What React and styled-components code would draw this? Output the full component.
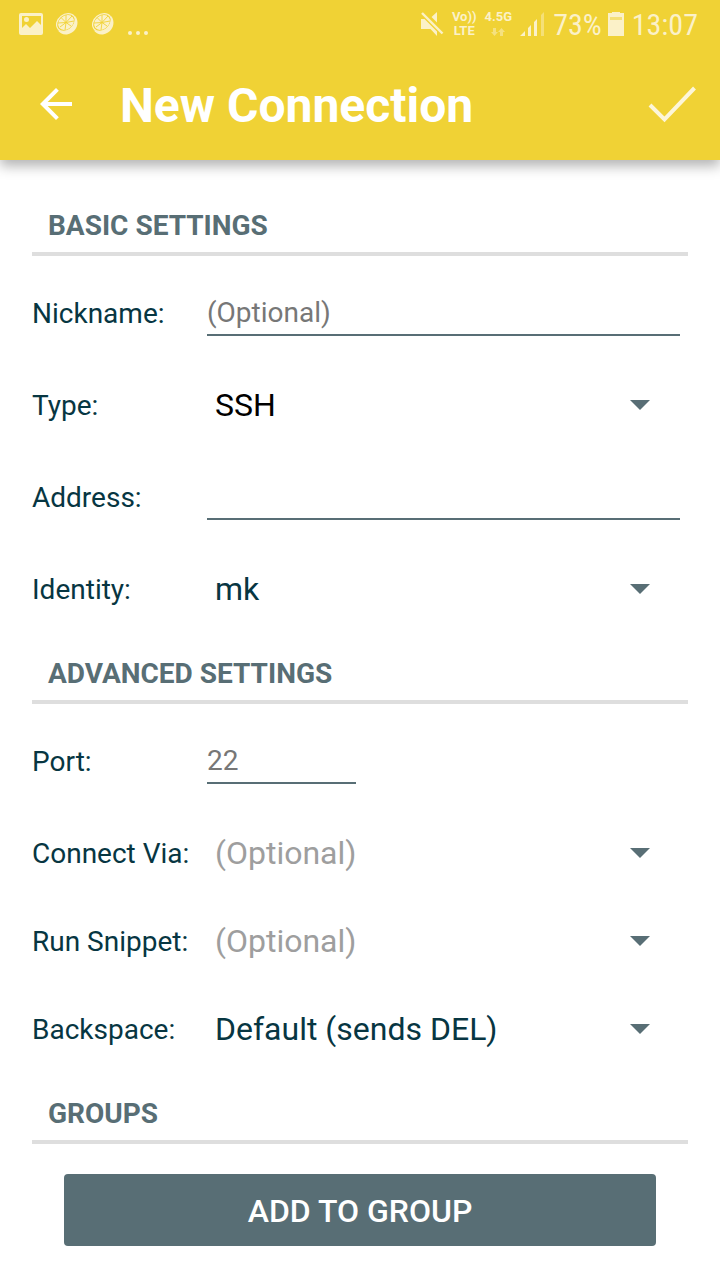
import React, { useState } from "react";
import styled, { createGlobalStyle } from "styled-components";

const App = () => {
  return (
    <>
      <GlobalStyle />
      <StatusBar />
      <Header />
      <Form onSubmit={(e) => e.preventDefault()}>
        <SectionTitle>BASIC SETTINGS</SectionTitle>
        <Section>
          <InputField id="nickname" label="Nickname:" placeholder="(Optional)" />
          <SelectField id="type" label="Type:" options={["SSH", "Telnet"]} color="#000000" />
          <InputField id="address" label="Address:" />
          <SelectField id="identity" label="Identity:" options={["mk"]} />
        </Section>

        <SectionTitle>ADVANCED SETTINGS</SectionTitle>
        <Section>
          <InputField id="port" label="Port:" placeholder="22" short />
          <SelectField id="via" label="Connect Via:" options={["(Optional)"]} color="#9e9e9e" />
          <SelectField id="snippet" label="Run Snippet:" options={["(Optional)"]} color="#9e9e9e" />
          <SelectField id="backspace" label="Backspace:" options={["Default (sends DEL)"]} />
        </Section>

        <SectionTitle>GROUPS</SectionTitle>
        <GroupButton type="button">ADD TO GROUP</GroupButton>
      </Form>
    </>
  );
};

const StatusBar = () => {
  return (
    <Status>
      <StatusGroup $gap="12px">
        <svg width="24" height="24" viewBox="0 0 24 24" fill="currentColor">
          <path
            fillRule="evenodd"
            d="M2 1h20a2 2 0 0 1 2 2v18a2 2 0 0 1-2 2H2a2 2 0 0 1-2-2V3a2 2 0 0 1 2-2zM3 4v12l4-4 4 4 7-7 4 4V4zM7.500 5a2.500 2.500 0 1 1 0 5a2.500 2.500 0 0 1 0-5z"
          />
        </svg>
        <Citrus />
        <Citrus />
        <svg width="22" height="24" viewBox="0 0 22 24" fill="currentColor">
          <circle cx="3" cy="21" r="2" />
          <circle cx="11" cy="21" r="2" />
          <circle cx="19" cy="21" r="2" />
        </svg>
      </StatusGroup>
      <StatusGroup $gap="8px">
        <svg width="24" height="26" viewBox="0 0 24 26" fill="currentColor">
          <path d="M1 8h3.500L17 20.500V25l-6.500-7H1zM11.500 6L17 1v10.500z" />
          <path d="M2 2l20.500 20.500" stroke="currentColor" strokeWidth="2.400" />
        </svg>
        <Network>
          <span>Vo))</span>
          <span>LTE</span>
        </Network>
        <Network>
          <span>4.5G</span>
          <svg width="14" height="14" viewBox="0 -3 14 14" fill="currentColor" opacity="0.500">
            <path d="M2 1h3v4h2L3.500 9 0 5h2zM9 9h3V5h2l-3.500-4L7 5h2z" />
          </svg>
        </Network>
        <svg width="25" height="26" viewBox="0 0 25 26" fill="currentColor">
          <path d="M0 25l5-5v5zM8 17l3-3v11H8zM14 11l3-3v17h-3z" />
          <path d="M21 4l3-3v24h-3z" opacity="0.450" />
        </svg>
        <StatusGroup $gap="6px">
          <StatusText>73%</StatusText>
          <svg width="16" height="26" viewBox="0 0 16 26" fill="currentColor">
            <path d="M4 2V1h8v1h4v4H0V2zM0 9h16v16H0z" />
            <path d="M0 5h2v5H0zM14 5h2v5h-2z" />
            <path d="M2 5h12v5H2z" opacity="0.450" />
          </svg>
        </StatusGroup>
        <StatusText>13:07</StatusText>
      </StatusGroup>
    </Status>
  );
};

const Citrus = () => {
  return (
    <svg width="24" height="24" viewBox="0 0 24 24" fill="none" stroke="currentColor">
      <path
        d="M20 4c5 5 2.500 17-8 18.500-4 .5-7.500-1.500-9.500-4.500 4 2.500 9 1.500 12.500-1.500 4-3.500 5.500-8 5-12.500z"
        fill="currentColor"
        stroke="none"
      />
      <ellipse cx="11" cy="10.500" rx="10.200" ry="8" transform="rotate(-38 11 10.500)" strokeWidth="1.200" />
      <ellipse
        cx="11"
        cy="10.500"
        rx="8.600"
        ry="6.600"
        transform="rotate(-38 11 10.500)"
        fill="currentColor"
        stroke="none"
      />
      <path
        d="M11 10.500L5 15M11 10.500L3 11M11 10.500L6 5.500M11 10.500V3M11 10.500L17 4M11 10.500L19 9M11 10.500L16 14M11 10.500L10 18"
        stroke="#f0d235"
        strokeWidth="0.900"
      />
    </svg>
  );
};

const Header = () => {
  return (
    <Toolbar>
      <IconButton type="button" aria-label="Back">
        <svg width="48" height="48" viewBox="0 0 24 24" fill="currentColor">
          <path d="M20 11H7.830l5.590-5.590L12 4l-8 8 8 8 1.410-1.410L7.830 13H20v-2z" />
        </svg>
      </IconButton>
      <Title>New Connection</Title>
      <IconButton type="button" aria-label="Save">
        <svg width="48" height="48" viewBox="0 0 48 48" fill="none" stroke="#fdf6d8" strokeWidth="4">
          <path d="M2 25L16.500 39.500L46.500 8" />
        </svg>
      </IconButton>
    </Toolbar>
  );
};

const InputField = (props) => {
  const { id, label, placeholder, short } = props;
  const [value, setValue] = useState("");

  return (
    <InputRow>
      <Label htmlFor={id}>{label}</Label>
      <TextInput
        id={id}
        type="text"
        placeholder={placeholder}
        value={value}
        onChange={(e) => setValue(e.target.value)}
        $short={short}
      />
    </InputRow>
  );
};

const SelectField = (props) => {
  const { id, label, options, color } = props;

  return (
    <SelectRow>
      <Label htmlFor={id}>{label}</Label>
      <SelectBox>
        <Select id={id} $color={color}>
          {options.map((option) => (
            <option key={option}>{option}</option>
          ))}
        </Select>
        <Arrow width="20" height="10" viewBox="0 0 20 10">
          <path d="M0 0h20L10 10z" fill="#586e75" />
        </Arrow>
      </SelectBox>
    </SelectRow>
  );
};

const GlobalStyle = createGlobalStyle`
  * {
    box-sizing: border-box;
  }
  body {
    margin: 0;
    background-color: #fff;
    font-family: Roboto, "Liberation Sans", sans-serif;
    color: #073642;
  }
  button, input, select {
    font-family: inherit;
  }
  svg {
    display: block;
    flex-shrink: 0;
  }
`;

const Status = styled.div`
  position: relative;
  z-index: 1;
  display: flex;
  justify-content: space-between;
  align-items: center;
  height: 48px;
  padding: 0 22px 0 19px;
  background-color: #f0d235;
  color: #fbf1c8;
`;

const StatusGroup = styled.div`
  display: flex;
  align-items: center;
  gap: ${(props) => props.$gap};
`;

const Network = styled.div`
  display: flex;
  flex-direction: column;
  align-items: center;
  font-size: 13px;
  font-weight: 700;
  line-height: 14px;
`;

const StatusText = styled.span`
  padding-top: 2px;
  font-family: "Roboto Condensed", Roboto, sans-serif;
  font-size: 30px;
  line-height: 32px;
`;

const Toolbar = styled.header`
  position: relative;
  display: flex;
  align-items: center;
  height: 112px;
  padding: 0 24px 0 32px;
  background-color: #f0d235;
  color: #fff;
  box-shadow: 0 6px 12px rgba(0, 0, 0, 0.3);
`;

const IconButton = styled.button`
  padding: 0;
  border: none;
  background: none;
  color: inherit;
  cursor: pointer;
`;

const Title = styled.h1`
  flex: 1;
  margin: 0 0 0 40px;
  padding-top: 4px;
  font-size: 48px;
  font-weight: 700;
  line-height: 56px;
`;

const Form = styled.form`
  padding: 24px 32px 32px;
`;

const Section = styled.div`
  padding-top: 8px;
`;

const SectionTitle = styled.h2`
  margin: 0;
  padding: 26px 16px 10px;
  border-bottom: 4px solid #dedede;
  color: #586e75;
  font-size: 28px;
  font-weight: 700;
  line-height: 32px;
`;

const InputRow = styled.div`
  display: flex;
  align-items: center;
  height: 96px;
  padding-right: 8px;
`;

const SelectRow = styled.div`
  display: flex;
  align-items: center;
  height: 88px;
`;

const Label = styled.label`
  flex: 0 0 175px;
  padding-top: 4px;
  font-size: 28px;
  line-height: 32px;
`;

const TextInput = styled.input`
  flex: ${(props) => (props.$short ? "0 0 149px" : "1")};
  min-width: 0;
  height: 48px;
  padding: 2px 0 0;
  border: none;
  border-bottom: 2px solid #586e75;
  outline: none;
  background: none;
  color: #073642;
  font-size: 28px;
  &::placeholder {
    color: #777;
    opacity: 1;
  }
`;

const SelectBox = styled.div`
  position: relative;
  flex: 1;
`;

const Select = styled.select`
  display: block;
  width: 100%;
  height: 48px;
  padding: 2px 64px 0 8px;
  border: none;
  outline: none;
  appearance: none;
  background: none;
  color: ${(props) => props.$color || "#073642"};
  font-size: 32px;
  cursor: pointer;
`;

const Arrow = styled.svg`
  position: absolute;
  top: 20px;
  right: 38px;
  pointer-events: none;
`;

const GroupButton = styled.button`
  display: block;
  width: calc(100% - 64px);
  height: 72px;
  margin: 30px 32px 0;
  padding: 2px 0 0;
  border: none;
  border-radius: 4px;
  background-color: #586e75;
  color: #fff;
  font-size: 32px;
  font-weight: 500;
  cursor: pointer;
`;

export default App;
